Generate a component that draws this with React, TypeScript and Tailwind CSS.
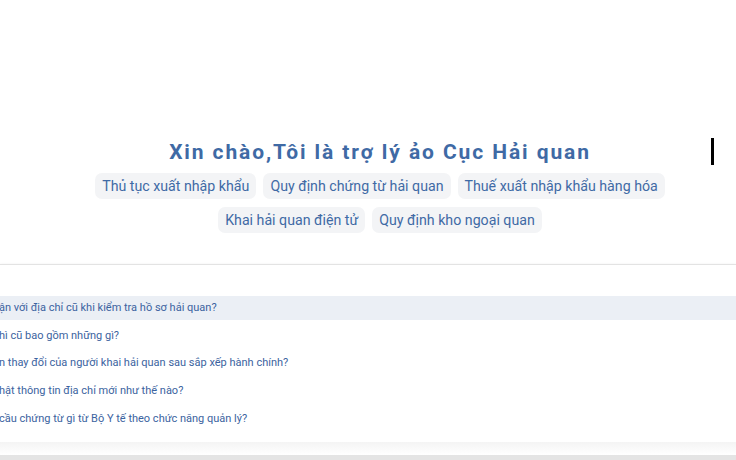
import React from "react";

const chipsRow1 = ["Thủ tục xuất nhập khẩu", "Quy định chứng từ hải quan", "Thuế xuất nhập khẩu hàng hóa"];
const chipsRow2 = ["Khai hải quan điện tử", "Quy định kho ngoại quan"];
const questions = [
  "ận với địa chỉ cũ khi kiểm tra hồ sơ hải quan?",
  "hì cũ bao gồm những gì?",
  "n thay đổi của người khai hải quan sau sắp xếp hành chính?",
  "hật thông tin địa chỉ mới như thế nào?",
  "cầu chứng từ gì từ Bộ Y tế theo chức năng quản lý?",
];

function Chip({ label }: { label: string }) {
  return (
    <div className="h-[26px] px-[7px] rounded-[7px] bg-[#f3f4f6] text-[14.2px] leading-[26px] text-[#3f6aa5] whitespace-nowrap">
      {label}
    </div>
  );
}

export default function App() {
  return (
    <div
      className="relative w-[736px] h-[460px] bg-white overflow-hidden flex flex-col"
      style={{ fontFamily: 'Roboto, "Liberation Sans", Arial, sans-serif' }}
    >
      <div className="h-[137px]" />
      <div className="pl-[24px] flex flex-col items-center">
        <h1 className="h-[30px] text-[21px] leading-[30px] font-bold tracking-[1.9px] text-[#3f6aa5]">
          Xin chào,Tôi là trợ lý ảo Cục Hải quan
        </h1>
        <div className="mt-[6px] flex flex-col items-center gap-[8px]">
          <div className="flex gap-[7px]">
            {chipsRow1.map((c) => (
              <Chip key={c} label={c} />
            ))}
          </div>
          <div className="flex gap-[7px]">
            {chipsRow2.map((c) => (
              <Chip key={c} label={c} />
            ))}
          </div>
        </div>
      </div>
      <div className="h-[31px]" />
      <div className="border-t border-[#e3e3e3] bg-white shadow-[0_1px_3px_rgba(0,0,0,0.12)] pt-[31px] pb-[11px] flex flex-col gap-[3.75px]">
        {questions.map((q, i) => (
          <div
            key={q}
            className={`h-[24px] flex items-center -ml-[1px] text-[11px] text-[#3b63a0] whitespace-nowrap ${
              i === 0 ? "bg-[#ebeff5]" : ""
            }`}
          >
            {q}
          </div>
        ))}
      </div>
      <div className="h-[13px] bg-gradient-to-b from-[#f4f4f4] to-white" />
      <div className="flex-1 bg-[#e4e4e4]" />
      <div className="absolute left-[711px] top-[138px] w-[3px] h-[27px] bg-black" />
    </div>
  );
}
